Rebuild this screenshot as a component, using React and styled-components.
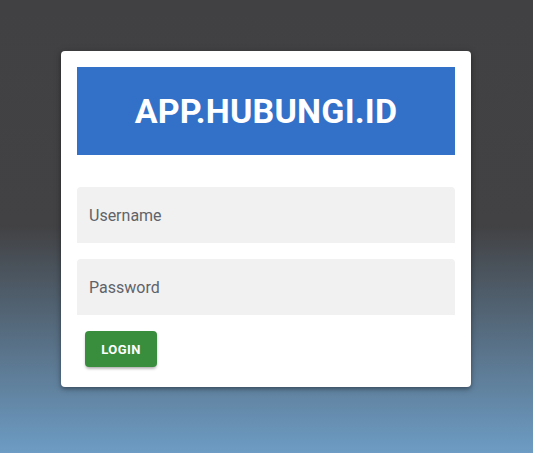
import React from 'react';
import styled, { createGlobalStyle } from 'styled-components';

const GlobalStyle = createGlobalStyle`
  html, body {
    margin: 0;
    padding: 0;
    height: 100%;
  }
  body {
    font-family: Roboto, "Liberation Sans", sans-serif;
  }
  #root {
    min-height: 100%;
  }
`;

const Page = styled.div`
  min-height: 453px;
  height: 100vh;
  box-sizing: border-box;
  background: linear-gradient(to bottom, #414143 0%, #424244 50%, #6d9cc4 100%);
  display: flex;
  justify-content: center;
  align-items: flex-start;
  padding: 51px 1px 0 0;
`;

const Card = styled.form`
  width: 410px;
  box-sizing: border-box;
  background: #fff;
  border-radius: 4px;
  padding: 16px 16px 20px;
  box-shadow: 0 2px 4px rgba(0, 0, 0, 0.35), 0 1px 10px rgba(0, 0, 0, 0.12);
  display: flex;
  flex-direction: column;
`;

const Banner = styled.div`
  height: 88px;
  background: #3370c8;
  display: flex;
  align-items: center;
  justify-content: center;
  margin-bottom: 32px;
`;

const Title = styled.h1`
  margin: 0;
  color: #fff;
  font-family: Roboto, "Liberation Sans", sans-serif;
  font-weight: 700;
  font-size: 34px;
  letter-spacing: 0.2px;
`;

const Field = styled.input`
  height: 56px;
  box-sizing: border-box;
  border: none;
  outline: none;
  border-radius: 4px 4px 0 0;
  background: #f1f1f1;
  padding: 0 12px;
  margin-bottom: 16px;
  font-family: Roboto, "Liberation Sans", sans-serif;
  font-size: 16px;
  color: #333;

  &::placeholder {
    color: #5f6369;
    opacity: 1;
  }
`;

const LoginButton = styled.button`
  align-self: flex-start;
  margin-left: 8px;
  width: 72px;
  height: 36px;
  border: none;
  border-radius: 4px;
  background: #388e3c;
  color: #fff;
  font-family: Roboto, "Liberation Sans", sans-serif;
  font-weight: 700;
  font-size: 13px;
  letter-spacing: 0.4px;
  box-shadow: 0 3px 3px -2px rgba(0, 0, 0, 0.2), 0 2px 3px rgba(0, 0, 0, 0.18);
  cursor: pointer;
`;

export default function App() {
  return (
    <>
      <GlobalStyle />
      <Page>
        <Card onSubmit={(e) => e.preventDefault()}>
          <Banner>
            <Title>APP.HUBUNGI.ID</Title>
          </Banner>
          <Field type="text" placeholder="Username" />
          <Field type="password" placeholder="Password" />
          <LoginButton type="submit">LOGIN</LoginButton>
        </Card>
      </Page>
    </>
  );
}
